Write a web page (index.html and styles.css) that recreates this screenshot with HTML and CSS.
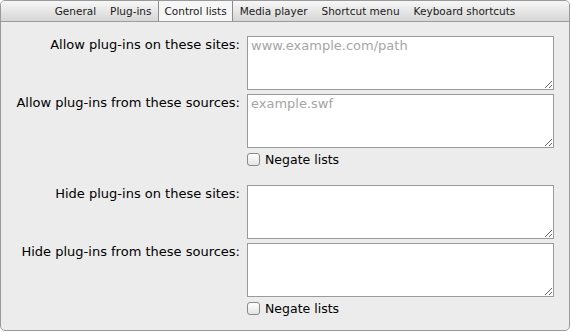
FILE: index.html
```html
<!DOCTYPE html>
<html lang="en">
<head>
    <meta charset="UTF-8">
    <title>Plug-in preferences</title>
    <link rel="stylesheet" href="styles.css">
</head>
<body>
    <div class="window">
        <div class="tabs">
            <span class="tab">General</span>
            <span class="tab">Plug-ins</span>
            <span class="tab selected">Control lists</span>
            <span class="tab">Media player</span>
            <span class="tab">Shortcut menu</span>
            <span class="tab">Keyboard shortcuts</span>
        </div>

        <form class="lists">
            <label for="allow_sites">Allow plug-ins on these sites:</label>
            <textarea id="allow_sites" placeholder="www.example.com/path"></textarea>

            <label for="allow_sources">Allow plug-ins from these sources:</label>
            <textarea id="allow_sources" placeholder="example.swf"></textarea>

            <div class="check">
                <input type="checkbox" id="negate_allow">
                <label for="negate_allow">Negate lists</label>
            </div>

            <label for="hide_sites">Hide plug-ins on these sites:</label>
            <textarea id="hide_sites"></textarea>

            <label for="hide_sources">Hide plug-ins from these sources:</label>
            <textarea id="hide_sources"></textarea>

            <div class="check">
                <input type="checkbox" id="negate_hide">
                <label for="negate_hide">Negate lists</label>
            </div>
        </form>
    </div>
</body>
</html>
```

FILE: styles.css
```css
body {
    margin: 0;
    background-color: #ffffff;
    font-family: 'DejaVu Sans', sans-serif;
}

.window {
    box-sizing: border-box;
    width: 570px;
    height: 331px;
    background-color: #ececec;
    border: 1px solid #9a9a9a;
    border-radius: 5px;
    overflow: hidden;
}

.tabs {
    display: flex;
    justify-content: center;
    height: 20px;
    background: linear-gradient(#f7f7f7, #d6d6d6);
    border-bottom: 1px solid #9c9c9c;
}
.tab {
    padding: 0 7px;
    font-size: 10.5px;
    line-height: 20px;
    color: #1a1a1a;
}
.tab.selected {
    padding: 0 5px;
    background-color: #f6f6f6;
    border-left: 1px solid #8c8c8c;
    border-right: 1px solid #8c8c8c;
}

.lists {
    display: grid;
    grid-template-columns: 239px 307px;
    column-gap: 7px;
    row-gap: 4px;
    padding-top: 14px;
}
.lists > label {
    text-align: right;
    font-size: 13px;
    line-height: 16px;
    padding-top: 1px;
    color: #000000;
}
textarea {
    box-sizing: border-box;
    height: 54px;
    width: 307px;
    margin: 0;
    padding: 1px 3px;
    border: 1px solid #9a9a9a;
    border-radius: 0;
    background-color: #ffffff;
    font-family: 'DejaVu Sans', sans-serif;
    font-size: 13px;
    resize: both;
}
textarea::placeholder {
    color: #a6a6a6;
}

.check {
    grid-column: 2;
    display: flex;
    align-items: center;
    gap: 5px;
    height: 15px;
    margin: 0 0 14px;
    font-size: 12.5px;
}
.check input {
    appearance: none;
    box-sizing: border-box;
    width: 13px;
    height: 13px;
    margin: 0;
    border: 1px solid #8a8a8a;
    border-radius: 3px;
    background: linear-gradient(#ffffff, #e4e4e4);
}
.check:last-child {
    margin-bottom: 0;
}
```
